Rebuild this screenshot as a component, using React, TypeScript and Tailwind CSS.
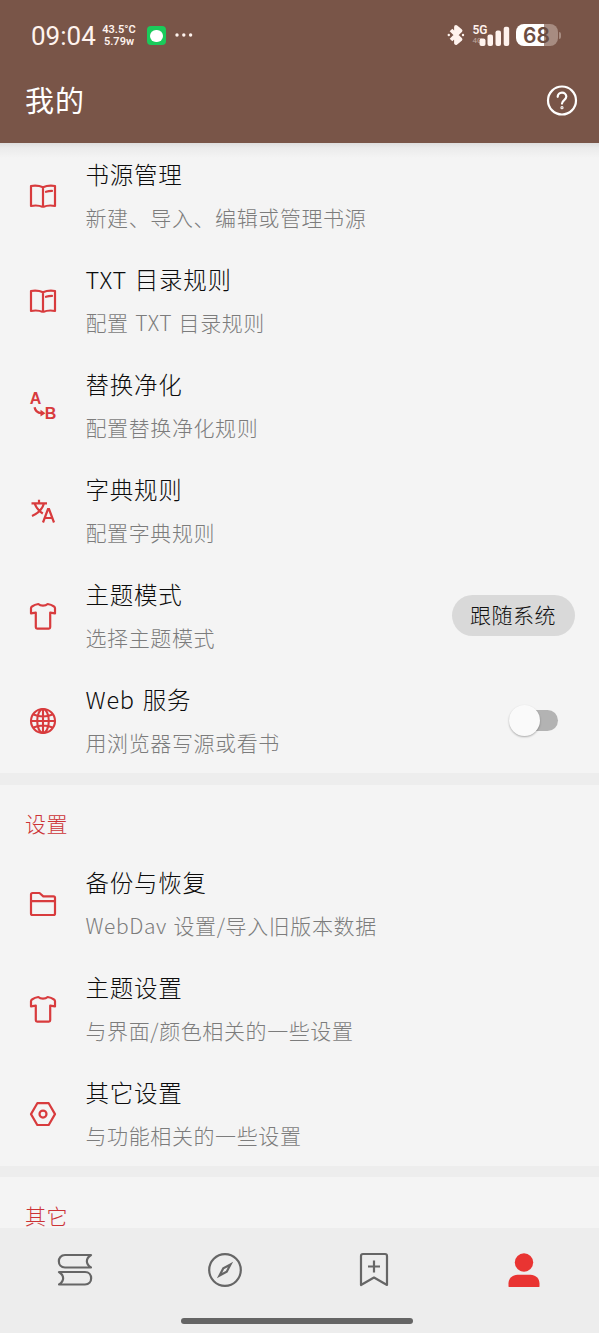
import React from "react";

const BookIcon = () => (
  <svg width="28" height="28" viewBox="0 0 28 28" fill="none" stroke="currentColor" strokeWidth="2.200" strokeLinejoin="round">
    <path d="M14 5.200C10.500 3.700 5.500 3.500 2 4v20c4-.8 8.500-.5 12 1M14 5.200C17.500 3.700 22.500 3.500 26 4v20c-4-.8-8.500-.5-12 1M14 5.200V25" />
    <path d="M17 9.800c1.800-.6 3.700-.9 6-.9" strokeLinecap="round" />
  </svg>
);

const ReplaceIcon = () => (
  <svg className="overflow-visible" width="28" height="28" viewBox="0 0 28 28" fill="none" stroke="currentColor" strokeWidth="2.300">
    <g fill="currentColor" stroke="none" fontFamily="Liberation Sans, sans-serif" fontWeight="700" fontSize="16">
      <text x="0.800" y="12">A</text>
      <text x="15.800" y="27">B</text>
    </g>
    <path d="M5.600 15.300c.6 3.500 3 5.700 6.700 5.900" />
    <path d="M11.500 17.700l5 3.600-5 3.300z" fill="currentColor" stroke="none" />
  </svg>
);

const TranslateIcon = () => (
  <svg width="28" height="28" viewBox="0 0 28 28" fill="none" stroke="currentColor" strokeWidth="2.200">
    <path d="M2.500 6.300h15.500M10 2.800v3.500M15 6.500c-1.700 5.400-5.500 9.700-12 12.400M5.600 6.700c1.800 4.400 4.300 7.400 8.200 9.800" />
    <path d="M14 25.500l5-13.500h1l5 13.500M15.800 21h7.600" />
  </svg>
);

const ShirtIcon = () => (
  <svg width="28" height="28" viewBox="0 0 28 28" fill="none" stroke="currentColor" strokeWidth="2.200" strokeLinejoin="round">
    <path d="M9.300 2c2.400 2.200 7 2.200 9.400 0 2.600.4 4.300 1.100 6.300 2.500.6.400 1 1 1 1.700v5.200l-4.800-.8v14.700c0 .8-.5 1.300-1.300 1.300H8.100c-.8 0-1.300-.5-1.300-1.300V10.600L2 11.400V6.200c0-.7.4-1.300 1-1.700C5 3.100 6.700 2.400 9.300 2z" />
  </svg>
);

const GlobeIcon = () => (
  <svg width="28" height="28" viewBox="0 0 28 28" fill="none" stroke="currentColor" strokeWidth="2.100">
    <circle cx="14" cy="14" r="12" />
    <ellipse cx="14" cy="14" rx="5.800" ry="12" />
    <path d="M2 14h24M4.500 7.500c6 2.600 13 2.600 19 0M4.500 20.500c6-2.600 13-2.600 19 0M14 2v24" />
  </svg>
);

const FolderIcon = () => (
  <svg width="28" height="28" viewBox="0 0 28 28" fill="none" stroke="currentColor" strokeWidth="2.200" strokeLinejoin="round">
    <path d="M2 4.500c0-.9.600-1.500 1.500-1.500h7l3.800 3.300h10.200c.9 0 1.500.6 1.500 1.500v15.700c0 .9-.6 1.500-1.500 1.500h-21c-.9 0-1.500-.6-1.500-1.500zM2 11.200h24" />
  </svg>
);

const HexagonIcon = () => (
  <svg width="28" height="28" viewBox="0 0 28 28" fill="none" stroke="currentColor" strokeWidth="2.200" strokeLinejoin="round">
    <path d="M8.300 3.200h11.400l6.300 10.900-6.300 10.900H8.300L2 14.100z" />
    <circle cx="14" cy="14.100" r="3.500" />
  </svg>
);

type Item = {
  icon: React.ReactNode;
  title: string;
  desc: string;
  action?: React.ReactNode;
};

const Row = ({ icon, title, desc, action }: Item) => {
  return (
    <div className="flex items-center h-[105px] pl-[28.500px] pr-[24.500px]">
      <div className="w-[57px] pt-px text-[#d83b3d]">{icon}</div>
      <div className="flex-1 flex flex-col gap-2 whitespace-nowrap">
        <h2 className="text-[23.500px] leading-[35px] tracking-[0.750px] [word-spacing:2px] text-[#0c0c0c]">{title}</h2>
        <p className="text-[21px] leading-[34px] tracking-[0.600px] [word-spacing:1.300px] text-[#7c7c7c]">{desc}</p>
      </div>
      {action}
    </div>
  );
};

const Toggle = () => (
  <button className="relative w-[49px] h-8 mr-[17px]" aria-label="Web 服务">
    <span className="block ml-4 w-[33px] h-[21px] rounded-full bg-[#b3b3b3]" />
    <span className="absolute left-0 top-0 w-[31px] h-[31px] rounded-full bg-[#fafafa] shadow-[0_1px_2px_rgba(0,0,0,0.3)]" />
  </button>
);

const general: Item[] = [
  { icon: <BookIcon />, title: "书源管理", desc: "新建、导入、编辑或管理书源" },
  { icon: <BookIcon />, title: "TXT 目录规则", desc: "配置 TXT 目录规则" },
  { icon: <ReplaceIcon />, title: "替换净化", desc: "配置替换净化规则" },
  { icon: <TranslateIcon />, title: "字典规则", desc: "配置字典规则" },
  {
    icon: <ShirtIcon />,
    title: "主题模式",
    desc: "选择主题模式",
    action: (
      <button className="w-[123px] h-[41px] pb-0.5 rounded-full bg-[#d9d9d9] text-[21px] tracking-[0.500px] text-[#111]">
        跟随系统
      </button>
    ),
  },
  { icon: <GlobeIcon />, title: "Web 服务", desc: "用浏览器写源或看书", action: <Toggle /> },
];

const settings: Item[] = [
  { icon: <FolderIcon />, title: "备份与恢复", desc: "WebDav 设置/导入旧版本数据" },
  { icon: <ShirtIcon />, title: "主题设置", desc: "与界面/颜色相关的一些设置" },
  { icon: <HexagonIcon />, title: "其它设置", desc: "与功能相关的一些设置" },
];

const StatusBar = () => (
  <div className="flex items-center h-[70px] pl-[31px] pr-[38px] text-[#fff3ee] font-normal font-['Roboto','Noto_Sans_CJK_SC',sans-serif]">
    <span className="text-[26px] leading-none w-[71px] pt-0.5">09:04</span>
    <div className="w-[34px] text-[11px] leading-[12px] font-semibold text-center pt-0.5">
      <div className="whitespace-nowrap">43.5°C</div>
      <div>5.79w</div>
    </div>
    <div className="ml-[11px] mt-px w-[19px] h-[19px] rounded-[4px] bg-[#1acb5b] flex items-center justify-center">
      <div className="w-[13px] h-[12px] rounded-full bg-white" />
    </div>
    <svg className="ml-[8px]" width="20" height="6" viewBox="0 0 20 6" fill="currentColor">
      <circle cx="3" cy="3" r="1.700" />
      <circle cx="9.800" cy="3" r="1.700" />
      <circle cx="16.600" cy="3" r="1.700" />
    </svg>
    <div className="ml-auto flex items-center">
      <svg className="mr-[3px]" width="18" height="22" viewBox="0 0 18 22" fill="none" stroke="currentColor" strokeWidth="3.800" strokeLinejoin="round">
        <path d="M4 6l9.500 9.300L9 19V3l4.500 3.700L4 16" />
        <circle cx="1.800" cy="11" r="1.200" fill="currentColor" stroke="none" />
        <circle cx="16" cy="11" r="1.200" fill="currentColor" stroke="none" />
      </svg>
      <div className="relative ml-[7px] w-[38px] h-[22px]">
        <svg width="38" height="22" viewBox="0 0 38 22" fill="currentColor">
          <rect x="4.500" y="14.500" width="6" height="7.500" rx="2" />
          <rect x="12.500" y="10.500" width="5.500" height="11.500" rx="2" />
          <rect x="20.500" y="6.500" width="5.500" height="15.500" rx="2" />
          <rect x="28.700" y="2.700" width="5.500" height="19.300" rx="2" />
        </svg>
        <span className="absolute -left-0.5 top-0 text-[12px] leading-[12px] font-semibold">5G</span>
        <span className="absolute -left-0.5 top-[13px] text-[8px] leading-[8px] opacity-50">4G</span>
      </div>
      <div className="ml-[3px] w-[42px] h-[22px] rounded-[8px] bg-[linear-gradient(to_right,#fff_67%,#a78c81_67%)] flex items-center justify-center text-[21px] leading-none font-semibold text-[#6b4c40] font-['Inter',sans-serif]">
        68
      </div>
      <div className="ml-px w-[2.500px] h-[7px] rounded-r-full bg-[#a78c81]" />
    </div>
  </div>
);

const BottomNav = () => (
  <nav className="h-[105px] shrink-0 bg-[#ededed] flex flex-col">
    <div className="h-[84px] flex items-center justify-around text-[#666]">
      <svg width="36" height="36" viewBox="0 0 36 36" fill="none" stroke="currentColor" strokeWidth="2.200" strokeLinejoin="round">
        <path d="M34 3H8C-.2 3-.2 15.500 8 15.500h26c-5.500-3.500-5.500-9 0-12.500zM2 20h26c8.200 0 8.200 12.500 0 12.500H2C7.500 29 7.500 23.500 2 20z" />
      </svg>
      <svg width="36" height="36" viewBox="0 0 36 36" fill="none" stroke="currentColor" strokeWidth="2.200">
        <circle cx="18" cy="18" r="15.800" />
        <path d="M23.500 12.500l-7.200 3.800-3.800 7.200 7.200-3.800z" />
      </svg>
      <svg width="36" height="36" viewBox="0 0 36 36" fill="none" stroke="currentColor" strokeWidth="2.200" strokeLinejoin="round">
        <path d="M5 4c0-1.200.8-2 2-2h22c1.200 0 2 .8 2 2v29l-13-7.500L5 33z" />
        <path d="M18 8.500v12M12 14.500h12" />
      </svg>
      <svg width="36" height="36" viewBox="0 0 36 36" className="text-[#e93432]" fill="currentColor">
        <circle cx="18" cy="10.500" r="9.200" />
        <path d="M2.500 34.500v-3c0-5 4-8.800 9-8.800h13c5 0 9 3.800 9 8.800v3c0 .3-.2.500-.5.500H3c-.3 0-.5-.2-.5-.5z" />
      </svg>
    </div>
    <div className="ml-[181px] mt-[6px] w-[232px] h-[6px] rounded-full bg-[#656565]" />
  </nav>
);

const App = () => {
  return (
    <div className="w-full h-[1333px] overflow-hidden flex flex-col bg-[#f4f4f4] font-['Noto_Sans_CJK_SC',sans-serif] font-light">
      <header className="h-[143px] shrink-0 bg-[#795548]">
        <StatusBar />
        <div className="flex items-center justify-between h-[61px] pl-[25px] pr-[21px] text-white">
          <h1 className="text-[29px] leading-none tracking-[1px] font-normal pb-0.5">我的</h1>
          <svg width="32" height="32" viewBox="0 0 32 32" fill="none" stroke="currentColor" strokeWidth="2.200" strokeLinecap="round">
            <circle cx="16" cy="15.500" r="14" />
            <path d="M11.700 11.800c0-2.400 1.900-4.200 4.300-4.200s4.300 1.700 4.300 4c0 3.400-4.300 3.500-4.300 7" />
            <circle cx="16" cy="22.700" r=".5" fill="currentColor" />
          </svg>
        </div>
      </header>

      <main className="flex-1 bg-[linear-gradient(to_bottom,#dedede_0px,#ebebeb_5px,#f4f4f4_15px)]">
        {general.map((item) => (
          <Row key={item.title} {...item} />
        ))}
        <div className="h-3 bg-[#ededed]" />
        <h3 className="h-[66px] pt-[27px] pl-[25px] text-[21px] leading-[23px] tracking-[0.600px] text-[#cc3336]">设置</h3>
        {settings.map((item) => (
          <Row key={item.title} {...item} />
        ))}
        <div className="h-[11px] bg-[#ededed]" />
        <h3 className="h-[51px] pt-[27px] pl-[25px] text-[21px] leading-[23px] tracking-[0.600px] text-[#cc3336]">其它</h3>
      </main>

      <BottomNav />
    </div>
  );
};

export default App;
